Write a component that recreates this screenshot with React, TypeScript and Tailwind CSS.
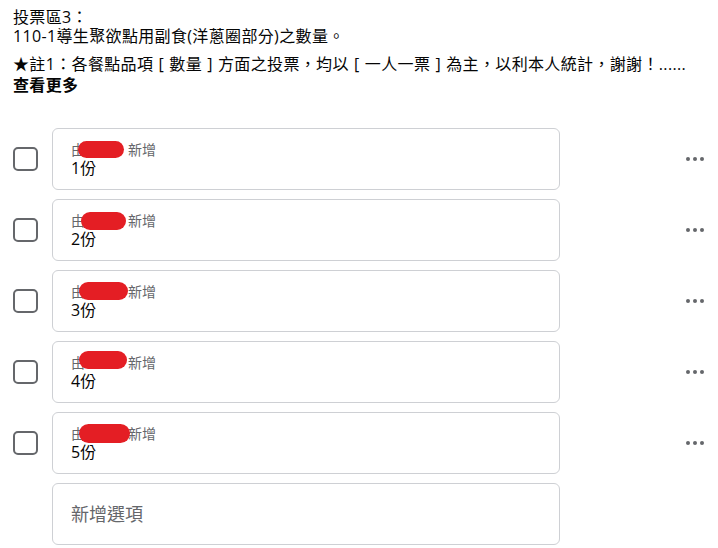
import React from 'react'

const options = [
  { label: '1份', blob: 'left-[7px] top-[0px] w-[46px] h-[17px]' },
  { label: '2份', blob: 'left-[10px] top-[0px] w-[45px] h-[18px]' },
  { label: '3份', blob: 'left-[8px] top-[-1px] w-[49px] h-[18px]' },
  { label: '4份', blob: 'left-[8px] top-[-3px] w-[48px] h-[18px]' },
  { label: '5份', blob: 'left-[8px] top-[-1px] w-[51px] h-[19px]' },
]

const Dots = () => (
  <svg width="18" height="4" viewBox="0 0 18 4" className="text-[#65676b]">
    <circle cx="2" cy="2" r="2" fill="currentColor" />
    <circle cx="9" cy="2" r="2" fill="currentColor" />
    <circle cx="16" cy="2" r="2" fill="currentColor" />
  </svg>
)

// fullwidth-style bracket, glyph centred in a 1em cell
const Br = ({ c }: { c: string }) => <span className="inline-block w-[1em] text-center">{c}</span>

const App = () => {
  return (
    <div
      className="w-[718px] h-[548px] bg-white overflow-hidden text-[#050505] pl-[13px] pr-[14px] pt-[8px]"
      style={{ fontFamily: '"Open Sans", "Noto Sans CJK TC", sans-serif' }}
    >
      <div className="text-[16px] tracking-[0.35px]">
        <p className="leading-[19px]">投票區3：</p>
        <p className="leading-[19px]">110-1導生聚欲點用副食(洋蔥圈部分)之數量。</p>
        <p className="mt-[8px] leading-[21px] whitespace-nowrap">
          ★註1：各餐點品項<Br c="[" />數量<Br c="]" />方面之投票，均以<Br c="[" />一人一票<Br c="]" />為主，以利本人統計，謝謝！......
        </p>
        <p className="font-bold leading-[21px]">查看更多</p>
      </div>

      <div className="mt-[32px] flex flex-col gap-[9px]">
        {options.map((opt, i) => (
          <div key={i} className="flex items-center">
            <div className="w-[25px] h-[24px] rounded-[5px] border-2 border-[#65676b] bg-white shrink-0" />
            <div className="ml-[14px] w-[508px] h-[62px] rounded-[6px] border border-[#ced0d4] px-[18px] flex flex-col justify-center">
              <div className="relative text-[14px] leading-[18px] text-[#65676b]">
                由<span className="inline-block w-[43px]" />新增
                <span className={`absolute rounded-full bg-[#e41e24] ${opt.blob}`} />
              </div>
              <div className="text-[16px] leading-[18px]">{opt.label}</div>
            </div>
            <div className="ml-auto flex items-center">
              <Dots />
            </div>
          </div>
        ))}
        <div className="flex items-center">
          <div className="w-[25px] shrink-0" />
          <div className="ml-[14px] w-[508px] h-[62px] rounded-[6px] border border-[#ced0d4] px-[18px] flex items-center">
            <span className="text-[18px] text-[#65676b]">新增選項</span>
          </div>
        </div>
      </div>
    </div>
  )
}

export default App
